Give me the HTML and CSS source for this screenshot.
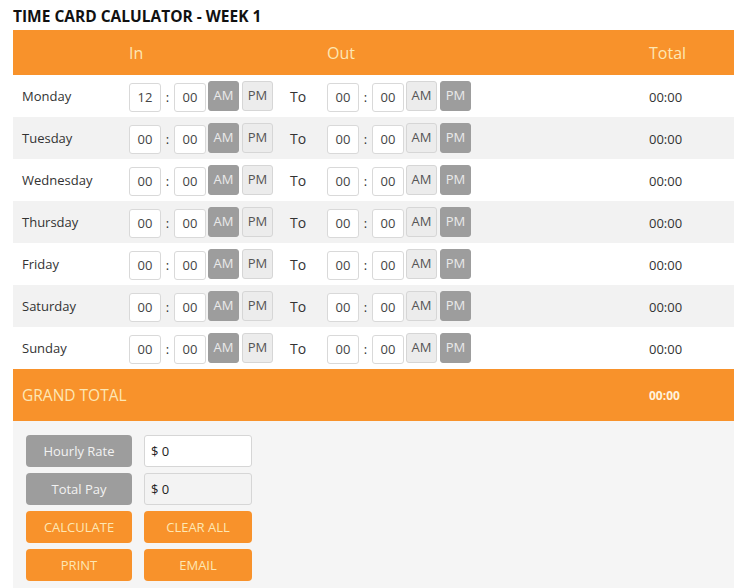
FILE: index.html
```html
<!DOCTYPE html>
<html>
<head>
<meta charset="utf-8">
<link rel="stylesheet" href="styles.css">
</head>
<body>
<div class="page">
  <h1 class="title">TIME CARD CALULATOR - WEEK 1</h1>
  <div class="head">
    <div class="c-day"></div>
    <div class="c-in">In</div>
    <div class="c-to"></div>
    <div class="c-out">Out</div>
    <div class="c-total">Total</div>
  </div>

  <div class="row">
    <div class="c-day">Monday</div>
    <div class="c-in"><span class="box">12</span><span class="colon">:</span><span class="box">00</span><span class="btn on">AM</span><span class="btn">PM</span></div>
    <div class="c-to">To</div>
    <div class="c-out"><span class="box">00</span><span class="colon">:</span><span class="box">00</span><span class="btn">AM</span><span class="btn on">PM</span></div>
    <div class="c-total">00:00</div>
  </div>
  <div class="row alt">
    <div class="c-day">Tuesday</div>
    <div class="c-in"><span class="box">00</span><span class="colon">:</span><span class="box">00</span><span class="btn on">AM</span><span class="btn">PM</span></div>
    <div class="c-to">To</div>
    <div class="c-out"><span class="box">00</span><span class="colon">:</span><span class="box">00</span><span class="btn">AM</span><span class="btn on">PM</span></div>
    <div class="c-total">00:00</div>
  </div>
  <div class="row">
    <div class="c-day">Wednesday</div>
    <div class="c-in"><span class="box">00</span><span class="colon">:</span><span class="box">00</span><span class="btn on">AM</span><span class="btn">PM</span></div>
    <div class="c-to">To</div>
    <div class="c-out"><span class="box">00</span><span class="colon">:</span><span class="box">00</span><span class="btn">AM</span><span class="btn on">PM</span></div>
    <div class="c-total">00:00</div>
  </div>
  <div class="row alt">
    <div class="c-day">Thursday</div>
    <div class="c-in"><span class="box">00</span><span class="colon">:</span><span class="box">00</span><span class="btn on">AM</span><span class="btn">PM</span></div>
    <div class="c-to">To</div>
    <div class="c-out"><span class="box">00</span><span class="colon">:</span><span class="box">00</span><span class="btn">AM</span><span class="btn on">PM</span></div>
    <div class="c-total">00:00</div>
  </div>
  <div class="row">
    <div class="c-day">Friday</div>
    <div class="c-in"><span class="box">00</span><span class="colon">:</span><span class="box">00</span><span class="btn on">AM</span><span class="btn">PM</span></div>
    <div class="c-to">To</div>
    <div class="c-out"><span class="box">00</span><span class="colon">:</span><span class="box">00</span><span class="btn">AM</span><span class="btn on">PM</span></div>
    <div class="c-total">00:00</div>
  </div>
  <div class="row alt">
    <div class="c-day">Saturday</div>
    <div class="c-in"><span class="box">00</span><span class="colon">:</span><span class="box">00</span><span class="btn on">AM</span><span class="btn">PM</span></div>
    <div class="c-to">To</div>
    <div class="c-out"><span class="box">00</span><span class="colon">:</span><span class="box">00</span><span class="btn">AM</span><span class="btn on">PM</span></div>
    <div class="c-total">00:00</div>
  </div>
  <div class="row">
    <div class="c-day">Sunday</div>
    <div class="c-in"><span class="box">00</span><span class="colon">:</span><span class="box">00</span><span class="btn on">AM</span><span class="btn">PM</span></div>
    <div class="c-to">To</div>
    <div class="c-out"><span class="box">00</span><span class="colon">:</span><span class="box">00</span><span class="btn">AM</span><span class="btn on">PM</span></div>
    <div class="c-total">00:00</div>
  </div>

  <div class="grand">
    <div class="grand-label">GRAND TOTAL</div>
    <div class="grand-value">00:00</div>
  </div>

  <div class="pay">
    <div class="pay-grid">
      <div class="label-btn">Hourly Rate</div>
      <div class="field">$ 0</div>
      <div class="label-btn">Total Pay</div>
      <div class="field ro">$ 0</div>
      <div class="act">CALCULATE</div>
      <div class="act">CLEAR ALL</div>
      <div class="act">PRINT</div>
      <div class="act">EMAIL</div>
    </div>
  </div>
</div>
</body>
</html>
```

FILE: styles.css
```css
* { box-sizing: border-box; }
html, body { margin: 0; padding: 0; background: #fff; }
body {
  font-family: "Open Sans", "DejaVu Sans", sans-serif;
  color: #333;
}
.page {
  width: 721px;
  margin-left: 13px;
}
.title {
  margin: 0;
  padding-top: 6px;
  height: 30px;
  font-size: 15.5px;
  font-weight: 700;
  color: #111;
  line-height: 20px;
}
.head, .row {
  display: flex;
  align-items: center;
}
.head {
  height: 45px;
  background: #f8922b;
  color: #fde7b4;
  font-size: 16px;
}
.row {
  height: 42px;
  background: #fff;
  font-size: 13px;
  color: #333;
}
.row.alt { background: #f2f2f2; }
.c-day { width: 116px; padding-left: 9px; padding-bottom: 1px; }
.c-in { width: 161px; display: flex; align-items: center; }
.c-to { width: 37px; font-size: 14px; padding-top: 1px; }
.c-out { width: 322px; display: flex; align-items: center; }
.c-total { flex: 1; }
.row .c-total { padding-top: 1px; }
.box {
  width: 32px;
  height: 29px;
  margin-top: 2px;
  border: 1px solid #d9d9d9;
  border-radius: 3px;
  background: #fff;
  display: flex;
  align-items: center;
  justify-content: center;
  font-size: 13px;
  color: #444;
}
.colon {
  width: 13px;
  text-align: center;
  font-size: 13px;
  margin-top: 2px;
}
.btn {
  width: 31px;
  height: 30px;
  margin-left: 3px;
  border: 1px solid #d6d6d6;
  border-radius: 3px;
  background: #ececec;
  display: flex;
  align-items: center;
  justify-content: center;
  font-size: 13px;
  color: #555;
  padding-bottom: 3px;
}
.box + .colon + .box + .btn { margin-left: 2px; }
.btn.on {
  background: #9d9d9d;
  border-color: #9d9d9d;
  color: #eaeaea;
}
.grand {
  height: 52px;
  background: #f8922b;
  display: flex;
  align-items: center;
  color: #fde7b4;
}
.grand-label {
  width: 636px;
  padding-left: 9px;
  font-size: 15.5px;
}
.grand-value {
  font-size: 12px;
  font-weight: 700;
  color: #fff3dc;
}
.pay {
  background: #f5f5f5;
  padding: 14px 13px 20px;
}
.pay-grid {
  display: grid;
  grid-template-columns: 106px 108px;
  grid-auto-rows: 32px;
  column-gap: 12px;
  row-gap: 6px;
}
.label-btn {
  background: #9d9d9d;
  border-radius: 4px;
  color: #f2f2f2;
  font-size: 13px;
  display: flex;
  align-items: center;
  justify-content: center;
}
.field {
  background: #fff;
  border: 1px solid #d6d6d6;
  border-radius: 3px;
  display: flex;
  align-items: center;
  padding-left: 6px;
  font-size: 13px;
  color: #222;
}
.field.ro { background: #f3f3f3; }
.act {
  background: #f8922b;
  border-radius: 4px;
  color: #fde7b4;
  font-size: 13px;
  display: flex;
  align-items: center;
  justify-content: center;
}
```
